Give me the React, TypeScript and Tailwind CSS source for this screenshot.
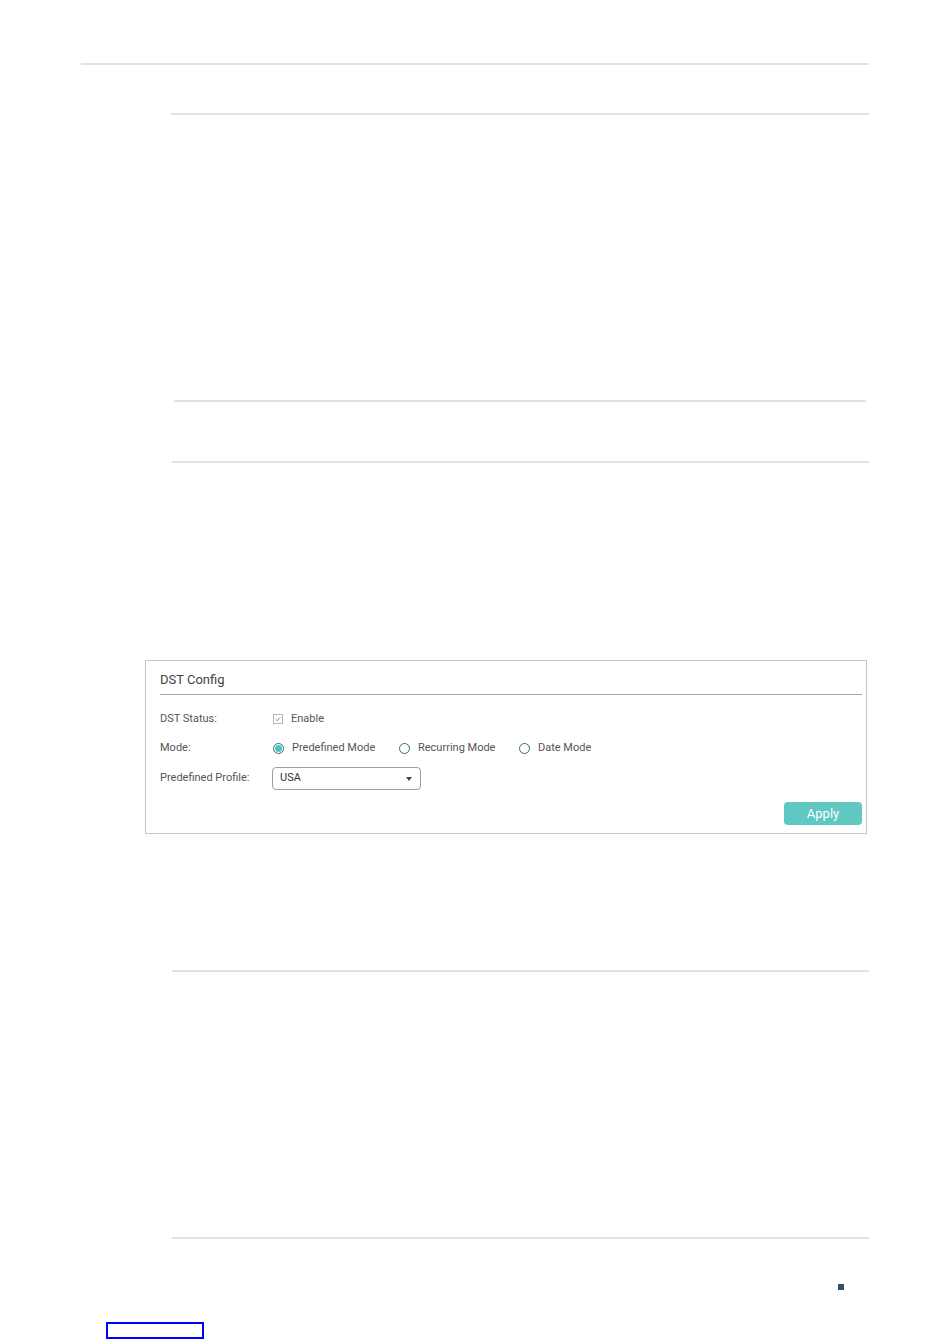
import React from 'react';

function Rule({ className }: { className: string }) {
  return <div className={`h-[2px] bg-[#dae5e9] ${className}`} />;
}

function Radio({ checked }: { checked?: boolean }) {
  return (
    <span className="flex h-[11px] w-[11px] items-center justify-center rounded-full border border-[#2f6f7a]">
      {checked && <span className="h-[7px] w-[7px] rounded-full bg-[#4fc3bd]" />}
    </span>
  );
}

function DstConfig() {
  return (
    <div className="ml-[145px] mt-[197px] h-[174px] w-[722px] border border-[#c6c6c6] bg-white pl-[14px] pr-[4px] text-[#555]">
      <div className="flex h-[34px] items-end border-b border-[#a9a9a9] pb-[5px] text-[13px] text-[#444]">
        DST Config
      </div>
      <div className="mt-[18px] flex h-[12px] items-center text-[11px]">
        <span className="w-[112px]">DST Status:</span>
        <span className="ml-[1px] flex h-[10px] w-[10px] items-center justify-center border border-[#b5b5b5]">
          <svg viewBox="0 0 10 10" className="h-[8px] w-[8px]">
            <path d="M2 5.2 L4.1 7.2 L8 2.8" fill="none" stroke="#3d86b0" strokeWidth="1" />
          </svg>
        </span>
        <span className="ml-[8px]">Enable</span>
      </div>
      <div className="mt-[17px] flex h-[12px] items-center text-[11px]">
        <span className="w-[113px]">Mode:</span>
        <Radio checked />
        <span className="ml-[8px] w-[107px]">Predefined Mode</span>
        <Radio />
        <span className="ml-[8px] w-[101px]">Recurring Mode</span>
        <Radio />
        <span className="ml-[8px]">Date Mode</span>
      </div>
      <div className="mt-[13px] flex items-center text-[11px]">
        <span className="w-[112px]">Predefined Profile:</span>
        <div className="flex h-[23px] w-[149px] items-center justify-between rounded-[4px] border border-[#9e9e9e] pl-[7px] pr-[8px] text-[#333]">
          <span>USA</span>
          <svg viewBox="0 0 6 4" className="h-[4px] w-[6px]">
            <path d="M0 0 L6 0 L3 4 Z" fill="#444" />
          </svg>
        </div>
      </div>
      <div className="mt-[12px] flex justify-end">
        <button className="h-[23px] w-[78px] rounded-[4px] bg-[#5fc8c3] text-[13px] text-white">Apply</button>
      </div>
    </div>
  );
}

export default function App() {
  return (
    <div className="relative h-[1344px] w-[950px] bg-white" style={{ fontFamily: 'Roboto, "Liberation Sans", Arial, sans-serif' }}>
      <div className="flex flex-col pt-[63px]">
        <Rule className="ml-[81px] w-[788px]" />
        <Rule className="ml-[171px] mt-[48px] w-[698px]" />
        <Rule className="ml-[174px] mt-[285px] w-[692px]" />
        <Rule className="ml-[172px] mt-[59px] w-[697px]" />
        <DstConfig />
        <Rule className="ml-[172px] mt-[136px] w-[697px]" />
        <Rule className="ml-[172px] mt-[265px] w-[697px]" />
        <div className="ml-[838px] mt-[45px] h-[6px] w-[6px] bg-[#2e5566]" />
        <div className="ml-[106px] mt-[32px] h-[17px] w-[98px] border-2 border-[#0000ff]" />
      </div>
    </div>
  );
}
